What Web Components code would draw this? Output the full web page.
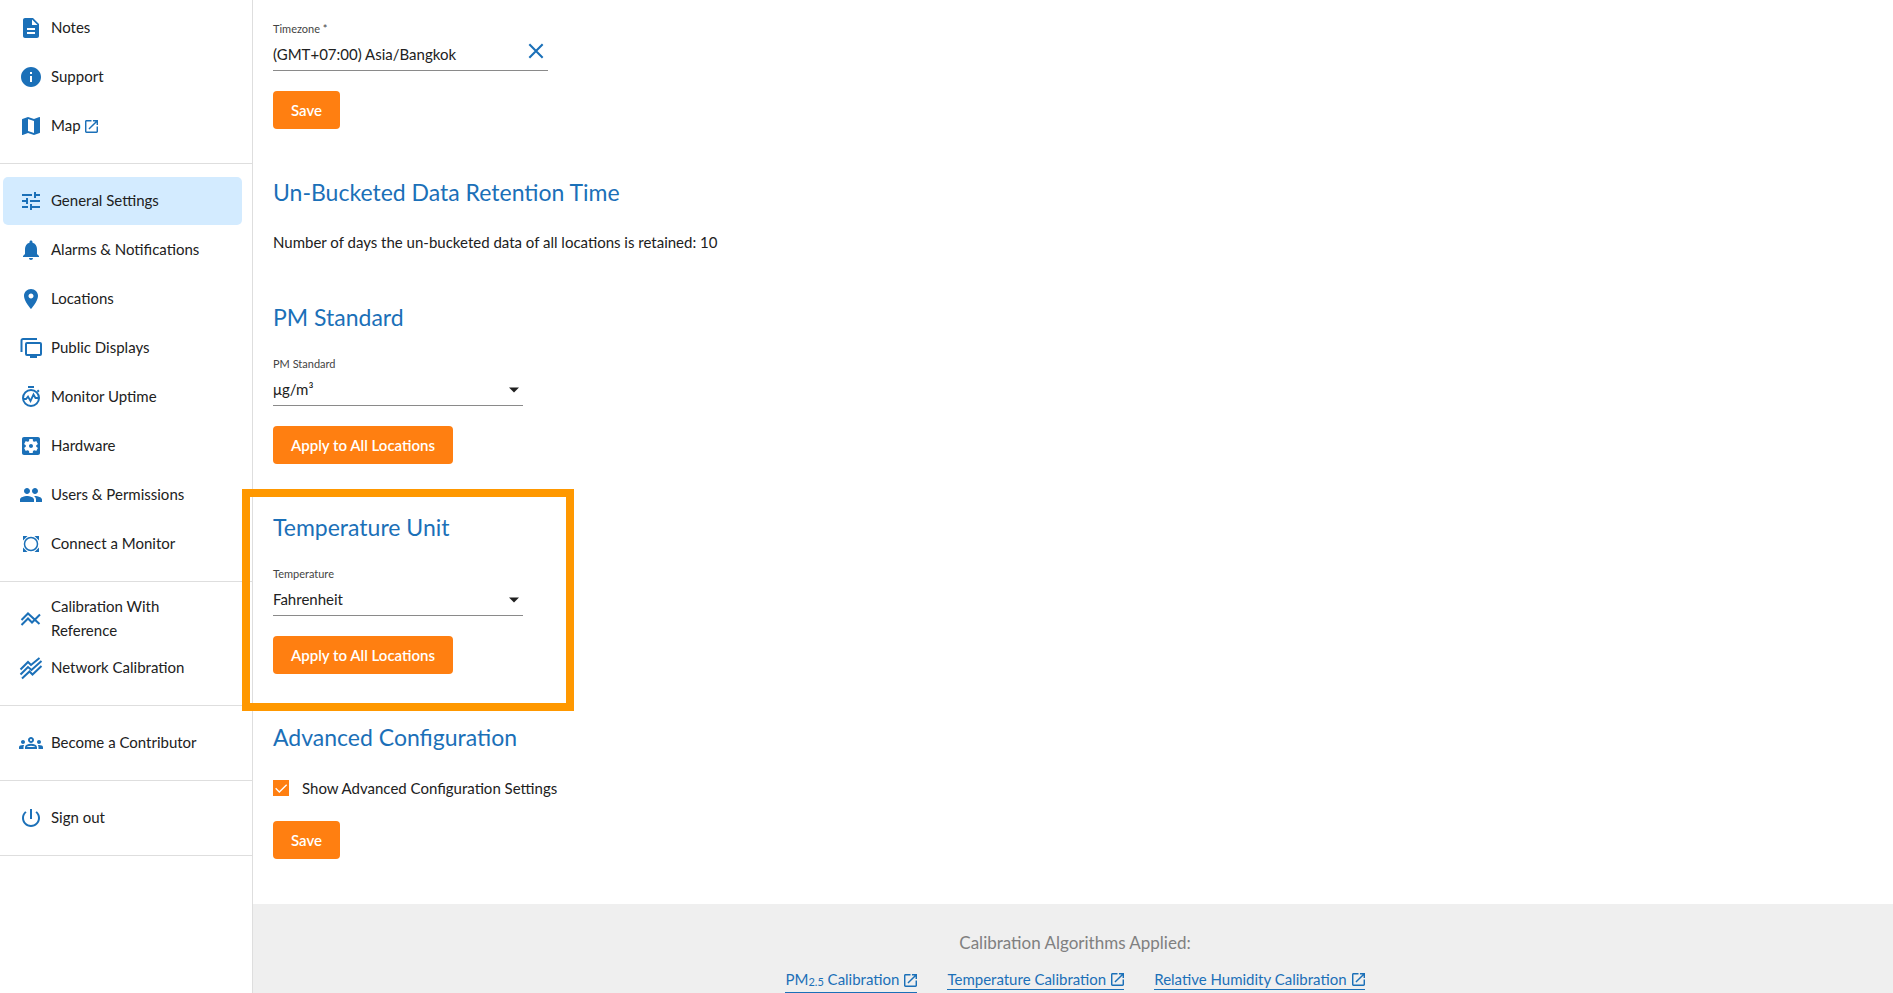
<!DOCTYPE html>
<html lang="en">
<head>
<meta charset="utf-8">
<meta name="viewport" content="width=device-width, initial-scale=1">
<title>General Settings</title>
<style>
  :root {
    --color-primary: #1b70b8;
    --color-accent: #ff7f11;
    --color-highlight: #ff9800;
    --color-text: #212121;
    --color-divider: #dedede;
    --color-active: #d3ebff;
    --color-footer: #efefef;
  }

  body {
    margin: 0;
    background: #fff;
    color: var(--color-text);
    font: 15px/24px Lato, "Open Sans", sans-serif;
  }
</style>
</head>
<body>
<settings-app>
  <side-nav slot="nav">
    <nav-group>
      <nav-item icon="notes">Notes</nav-item>
      <nav-item icon="info">Support</nav-item>
      <nav-item icon="map" external>Map</nav-item>
    </nav-group>
    <nav-group>
      <nav-item icon="tune" active>General Settings</nav-item>
      <nav-item icon="bell">Alarms &amp; Notifications</nav-item>
      <nav-item icon="pin">Locations</nav-item>
      <nav-item icon="displays">Public Displays</nav-item>
      <nav-item icon="uptime">Monitor Uptime</nav-item>
      <nav-item icon="hardware">Hardware</nav-item>
      <nav-item icon="people">Users &amp; Permissions</nav-item>
      <nav-item icon="connect">Connect a Monitor</nav-item>
    </nav-group>
    <nav-group>
      <nav-item icon="calibration">Calibration With Reference</nav-item>
      <nav-item icon="network">Network Calibration</nav-item>
    </nav-group>
    <nav-group>
      <nav-item icon="groups">Become a Contributor</nav-item>
    </nav-group>
    <nav-group>
      <nav-item icon="power">Sign out</nav-item>
    </nav-group>
  </side-nav>

  <settings-section>
    <text-field label="Timezone *" value="(GMT+07:00) Asia/Bangkok"></text-field>
    <action-button>Save</action-button>
  </settings-section>
  <settings-section heading="Un-Bucketed Data Retention Time">
    <span>Number of days the un-bucketed data of all locations is retained: 10</span>
  </settings-section>
  <settings-section heading="PM Standard">
    <select-field label="PM Standard" options="μg/m³|US AQI"></select-field>
    <action-button>Apply to All Locations</action-button>
  </settings-section>
  <settings-section heading="Temperature Unit" highlighted>
    <select-field label="Temperature" options="Fahrenheit|Celsius"></select-field>
    <action-button>Apply to All Locations</action-button>
  </settings-section>
  <settings-section heading="Advanced Configuration">
    <check-field checked>Show Advanced Configuration Settings</check-field>
    <action-button>Save</action-button>
  </settings-section>

  <calibration-footer slot="footer">
    <external-link>PM<sub>2.5</sub> Calibration</external-link>
    <external-link>Temperature Calibration</external-link>
    <external-link>Relative Humidity Calibration</external-link>
  </calibration-footer>
</settings-app>

<script>
// Icon bodies, drawn on a 24x24 grid
const ICONS = {
  notes: '<path d="M14 2H6c-1.1 0-2 .9-2 2v16c0 1.1.9 2 2 2h12c1.1 0 2-.9 2-2V8l-6-6zm2 16H8v-2h8v2zm0-4H8v-2h8v2zm-3-5V3.5L18.5 9H13z"/>',
  info: '<path d="M12 2C6.48 2 2 6.48 2 12s4.48 10 10 10 10-4.48 10-10S17.52 2 12 2zm1 15h-2v-6h2v6zm0-8h-2V7h2v2z"/>',
  map: '<path d="M15 19l-6-2.11V5l6 2.11M20.5 3h-.16L15 5.1 9 3 3.36 4.9c-.21.07-.36.25-.36.48V20.5a.5.5 0 0 0 .5.5l.16-.03L9 18.9l6 2.1 5.64-1.9c.21-.1.36-.25.36-.48V3.5a.5.5 0 0 0-.5-.5z"/>',
  tune: '<path d="M3 17v2h6v-2H3zM3 5v2h10V5H3zm10 16v-2h8v-2h-8v-2h-2v6h2zM7 9v2H3v2h4v2h2V9H7zm14 4v-2H11v2h10zm-6-4h2V7h4V5h-4V3h-2v6z"/>',
  bell: '<path d="M12 22c1.1 0 2-.9 2-2h-4c0 1.1.89 2 2 2zm6-6v-5c0-3.07-1.64-5.64-4.5-6.32V4c0-.83-.67-1.5-1.5-1.5s-1.5.67-1.5 1.5v.68C7.63 5.36 6 7.92 6 11v5l-2 2v1h16v-1l-2-2z"/>',
  pin: '<path d="M12 2C8.13 2 5 5.13 5 9c0 5.25 7 13 7 13s7-7.75 7-13c0-3.87-3.13-7-7-7zm0 9.5c-1.38 0-2.5-1.12-2.5-2.5s1.12-2.5 2.5-2.5 2.5 1.12 2.5 2.5-1.12 2.5-2.5 2.5z"/>',
  displays: '<path d="M18 3H4a1.5 1.5 0 0 0-1.500 1.500V16" fill="none" stroke="currentColor" stroke-width="2"/><rect x="7" y="7" width="15" height="12" rx="1" fill="none" stroke="currentColor" stroke-width="2"/><path d="M11 19h7v3h-7z"/>',
  uptime: '<circle cx="12" cy="13" r="8" fill="none" stroke="currentColor" stroke-width="2"/><path d="M9 1h6v2H9zM17.700 5.900l1.400-1.400 1.500 1.500-1.400 1.400z"/><path d="M4 14h3l2-2.500 2.500 4.500 3-6.500 2 3.500H20" fill="none" stroke="currentColor" stroke-width="1.800"/>',
  hardware: '<path d="M12 10c-1.100 0-2 .9-2 2s.9 2 2 2 2-.9 2-2-.9-2-2-2zm7-7H5c-1.110 0-2 .9-2 2v14c0 1.100.89 2 2 2h14c1.110 0 2-.9 2-2V5c0-1.100-.89-2-2-2zm-1.750 9c0 .23-.02.46-.05.68l1.480 1.160c.13.11.17.3.08.45l-1.400 2.420c-.09.15-.27.21-.43.15l-1.740-.7c-.36.28-.76.51-1.180.69l-.26 1.850c-.03.17-.18.3-.35.3h-2.800c-.17 0-.32-.13-.35-.29l-.26-1.850c-.43-.18-.82-.41-1.180-.69l-1.740.7c-.16.06-.34 0-.43-.15l-1.400-2.420c-.09-.15-.05-.34.08-.45l1.480-1.160c-.03-.23-.05-.46-.05-.69 0-.23.02-.46.05-.68l-1.480-1.160c-.13-.11-.17-.3-.08-.45l1.400-2.420c.09-.15.27-.21.43-.15l1.740.7c.36-.28.76-.51 1.180-.69l.26-1.850c.03-.17.18-.3.35-.3h2.800c.17 0 .32.13.35.29l.26 1.850c.43.18.82.41 1.180.69l1.740-.7c.16-.06.34 0 .43.15l1.400 2.420c.09.15.05.34-.08.45l-1.480 1.160c.03.23.05.46.05.69z"/>',
  people: '<path d="M16 11c1.660 0 2.990-1.340 2.990-3S17.660 5 16 5s-3 1.340-3 3 1.340 3 3 3zm-8 0c1.660 0 2.990-1.340 2.990-3S9.660 5 8 5 5 6.340 5 8s1.340 3 3 3zm0 2c-2.330 0-7 1.170-7 3.500V19h14v-2.500c0-2.330-4.670-3.500-7-3.500zm8 0c-.29 0-.62.02-.97.05 1.160.84 1.970 1.970 1.970 3.450V19h6v-2.500c0-2.330-4.670-3.500-7-3.500z"/>',
  connect: '<circle cx="12" cy="12" r="6.500" fill="none" stroke="currentColor" stroke-width="1.500"/><path d="M4 4h4.500L4 8.500zM20 4v4.500L15.500 4zM4 20v-4.500L8.500 20zM20 20h-4.500l4.500-4.500z"/>',
  calibration: '<path d="M2.500 13L9 6.500 20.500 17M2.500 18L9 11.500l4 4L21 7.500" fill="none" stroke="currentColor" stroke-width="2"/>',
  network: '<path d="M1.500 13.500L9 6l3 3 8.500-7M1.500 18.500L9 11l3.500 3L22.500 5M3 22.500l7.500-7 3 3L22.500 10" fill="none" stroke="currentColor" stroke-width="2"/>',
  groups: '<path d="M4 13c1.100 0 2-.9 2-2s-.9-2-2-2-2 .9-2 2 .9 2 2 2zm1.130 1.100c-.37-.06-.74-.1-1.130-.1-.99 0-1.930.21-2.780.58C.48 14.900 0 15.620 0 16.430V18h4.500v-1.610c0-.83.23-1.610.63-2.290zM20 13c1.100 0 2-.9 2-2s-.9-2-2-2-2 .9-2 2 .9 2 2 2zm4 3.430c0-.81-.48-1.530-1.220-1.850-.85-.37-1.790-.58-2.780-.58-.39 0-.76.04-1.130.1.400.68.63 1.460.63 2.290V18H24v-1.570zm-7.760-2.780c-1.170-.52-2.610-.9-4.240-.9-1.630 0-3.070.39-4.240.9C6.680 14.130 6 15.210 6 16.390V18h12v-1.610c0-1.180-.68-2.260-1.760-2.740zM8.070 16c.09-.23.13-.39.91-.69.97-.38 1.990-.56 3.020-.56s2.050.18 3.020.56c.77.3.81.46.91.69H8.070zM12 8c.55 0 1 .45 1 1s-.45 1-1 1-1-.45-1-1 .45-1 1-1m0-2c-1.660 0-3 1.340-3 3s1.340 3 3 3 3-1.340 3-3-1.340-3-3-3z"/>',
  power: '<path d="M13 3h-2v10h2V3zm4.830 2.170l-1.420 1.420C17.990 7.860 19 9.810 19 12c0 3.870-3.130 7-7 7s-7-3.130-7-7c0-2.190 1.010-4.140 2.580-5.420L6.170 5.170C4.230 6.820 3 9.260 3 12c0 4.970 4.030 9 9 9s9-4.030 9-9c0-2.740-1.230-5.180-3.170-6.830z"/>',
  external: '<path d="M19 19H5V5h7V3H5c-1.110 0-2 .9-2 2v14c0 1.100.89 2 2 2h14c1.100 0 2-.9 2-2v-7h-2v7zM14 3v2h3.590l-9.830 9.830 1.410 1.410L19 6.410V10h2V3h-7z"/>',
  close: '<path d="M4 4l16 16M20 4L4 20" fill="none" stroke="currentColor" stroke-width="2.500"/>',
  check: '<path d="M4 12.500l5.500 5.500L20.500 7" fill="none" stroke="currentColor" stroke-width="2"/>',
  caret: '<path d="M2 7h20L12 17z"/>',
};

// Shared shadow root setup
class BaseElement extends HTMLElement {
  connectedCallback() {
    if (this.shadowRoot) return;
    this.attachShadow({ mode: 'open' }).innerHTML = this.template();
    this.setup();
  }

  setup() {}
}

class AppIcon extends BaseElement {
  template() {
    const name = this.getAttribute('name');
    const viewBox = name === 'external' ? '3 3 18 18' : '0 0 24 24';
    return `
      <style>
        :host { display: block; flex: none; width: 24px; height: 24px; }
        svg { display: block; width: 100%; height: 100%; fill: currentColor; }
      </style>
      <svg viewBox="${viewBox}" aria-hidden="true">${ICONS[name]}</svg>
    `;
  }
}

class SettingsApp extends BaseElement {
  template() {
    return `
      <style>
        :host {
          display: grid;
          grid-template-columns: 252px 1fr;
          height: 100vh;
          overflow: hidden;
        }
        .content {
          display: flex;
          flex-direction: column;
          border-left: 1px solid var(--color-divider);
        }
        main {
          display: flex;
          flex-direction: column;
          gap: 48px;
          padding: 20px 20px 45px;
        }
      </style>
      <slot name="nav"></slot>
      <div class="content">
        <main><slot></slot></main>
        <slot name="footer"></slot>
      </div>
    `;
  }
}

class SideNav extends BaseElement {
  template() {
    return `
      <style>
        :host { display: block; }
        ::slotted(nav-group) { padding: 13px 10px 13px 3px; border-bottom: 1px solid var(--color-divider); }
        ::slotted(nav-group:first-child) { padding-top: 4px; }
      </style>
      <nav><slot></slot></nav>
    `;
  }
}

class NavGroup extends BaseElement {
  template() {
    return `
      <style>
        :host { display: flex; flex-direction: column; gap: 1px; }
      </style>
      <slot></slot>
    `;
  }
}

class NavItem extends BaseElement {
  template() {
    const external = this.hasAttribute('external') ? '<app-icon class="external" name="external"></app-icon>' : '';
    return `
      <style>
        :host { display: block; }
        a {
          display: flex;
          align-items: center;
          height: 48px;
          padding: 0 30px 0 16px;
          border-radius: 5px;
          color: inherit;
          text-decoration: none;
        }
        a:hover, :host([active]) a { background: var(--color-active); }
        span { padding: 0 4px 2px 8px; }
        app-icon { color: var(--color-primary); }
        .external { width: 13px; height: 13px; }
      </style>
      <a href="#"${this.hasAttribute('active') ? ' aria-current="page"' : ''}>
        <app-icon name="${this.getAttribute('icon')}"></app-icon>
        <span><slot></slot></span>${external}
      </a>
    `;
  }
}

class SettingsSection extends BaseElement {
  template() {
    const heading = this.getAttribute('heading');
    return `
      <style>
        :host { display: block; position: relative; }
        h2 {
          margin: 0 0 23px;
          color: var(--color-primary);
          font-size: 23px;
          font-weight: 400;
          line-height: 30px;
        }
        .body { display: flex; flex-direction: column; align-items: flex-start; gap: 20px; }
        /* callout frame drawn over the page */
        :host([highlighted])::after {
          content: "";
          position: absolute;
          top: -23px;
          left: -31px;
          bottom: -37px;
          width: 316px;
          border: 8px solid var(--color-highlight);
          pointer-events: none;
        }
      </style>
      <section>
        ${heading ? `<h2>${heading}</h2>` : ''}
        <div class="body"><slot></slot></div>
      </section>
    `;
  }
}

const FIELD_STYLES = `
  :host { display: block; max-width: 100%; }
  label { display: block; font-size: 11px; line-height: 18px; color: #444; }
  .control { display: flex; align-items: center; height: 32px; border-bottom: 1px solid #8a8a8a; }
  input, select {
    flex: 1;
    min-width: 0;
    height: 32px;
    padding: 0;
    border: 0;
    outline: 0;
    background: none;
    color: inherit;
    font: inherit;
    appearance: none;
  }
`;

class TextField extends BaseElement {
  template() {
    return `
      <style>
        ${FIELD_STYLES}
        :host { width: 275px; }
        button {
          display: flex;
          padding: 0 2px 6px;
          border: 0;
          background: none;
          color: var(--color-primary);
          cursor: pointer;
        }
        app-icon { width: 20px; height: 20px; }
      </style>
      <label for="field">${this.getAttribute('label')}</label>
      <div class="control">
        <input id="field" type="text" value="${this.getAttribute('value')}">
        <button type="button" aria-label="Clear"><app-icon name="close"></app-icon></button>
      </div>
    `;
  }

  setup() {
    const input = this.shadowRoot.querySelector('input');
    this.shadowRoot.querySelector('button').addEventListener('click', () => {
      input.value = '';
      input.focus();
    });
  }
}

class SelectField extends BaseElement {
  template() {
    const options = this.getAttribute('options').split('|');
    return `
      <style>
        ${FIELD_STYLES}
        :host { width: 250px; }
        .control { display: grid; align-items: center; }
        select, app-icon { grid-area: 1 / 1; }
        app-icon { justify-self: end; width: 12px; height: 12px; margin: 2px 3px 0 0; pointer-events: none; }
      </style>
      <label for="field">${this.getAttribute('label')}</label>
      <div class="control">
        <select id="field">${options.map((option) => `<option>${option}</option>`).join('')}</select>
        <app-icon name="caret"></app-icon>
      </div>
    `;
  }
}

class CheckField extends BaseElement {
  template() {
    return `
      <style>
        :host { display: block; }
        label { display: flex; align-items: center; gap: 13px; line-height: 26px; cursor: pointer; }
        .box { display: grid; }
        input, app-icon { grid-area: 1 / 1; width: 16px; height: 16px; margin: 0; }
        input { appearance: none; border: 2px solid #757575; }
        input:checked { border-color: var(--color-accent); background: var(--color-accent); }
        app-icon { z-index: 1; color: #fff; pointer-events: none; }
      </style>
      <label>
        <span class="box">
          <input type="checkbox"${this.hasAttribute('checked') ? ' checked' : ''}>
          <app-icon name="check"></app-icon>
        </span>
        <span><slot></slot></span>
      </label>
    `;
  }
}

class ActionButton extends BaseElement {
  template() {
    return `
      <style>
        :host { display: block; }
        button {
          display: block;
          height: 38px;
          padding: 0 18px;
          border: 0;
          border-radius: 4px;
          background: var(--color-accent);
          color: #fff;
          font: inherit;
          font-weight: 600;
          cursor: pointer;
        }
      </style>
      <button type="button"><slot></slot></button>
    `;
  }
}

class ExternalLink extends BaseElement {
  template() {
    return `
      <style>
        :host { display: block; }
        a {
          display: flex;
          align-items: center;
          gap: 5px;
          border-bottom: 1px solid;
          color: var(--color-primary);
          line-height: 20px;
          text-decoration: none;
        }
        ::slotted(sub) { font-size: 11px; vertical-align: -1px; }
        app-icon { width: 13px; height: 13px; }
      </style>
      <a href="#"><span><slot></slot></span><app-icon name="external"></app-icon></a>
    `;
  }
}

class CalibrationFooter extends BaseElement {
  template() {
    return `
      <style>
        :host { display: block; flex: 1; padding: 27px 16px 0 20px; background: var(--color-footer); }
        h3 {
          margin: 0 0 14px;
          color: #808080;
          font-size: 17px;
          font-weight: 400;
          line-height: 24px;
          text-align: center;
        }
        .links { display: flex; flex-wrap: wrap; justify-content: center; align-items: flex-start; gap: 30px; }
      </style>
      <footer>
        <h3>Calibration Algorithms Applied:</h3>
        <div class="links"><slot></slot></div>
      </footer>
    `;
  }
}

customElements.define('app-icon', AppIcon);
customElements.define('settings-app', SettingsApp);
customElements.define('side-nav', SideNav);
customElements.define('nav-group', NavGroup);
customElements.define('nav-item', NavItem);
customElements.define('settings-section', SettingsSection);
customElements.define('text-field', TextField);
customElements.define('select-field', SelectField);
customElements.define('check-field', CheckField);
customElements.define('action-button', ActionButton);
customElements.define('external-link', ExternalLink);
customElements.define('calibration-footer', CalibrationFooter);
</script>
</body>
</html>
